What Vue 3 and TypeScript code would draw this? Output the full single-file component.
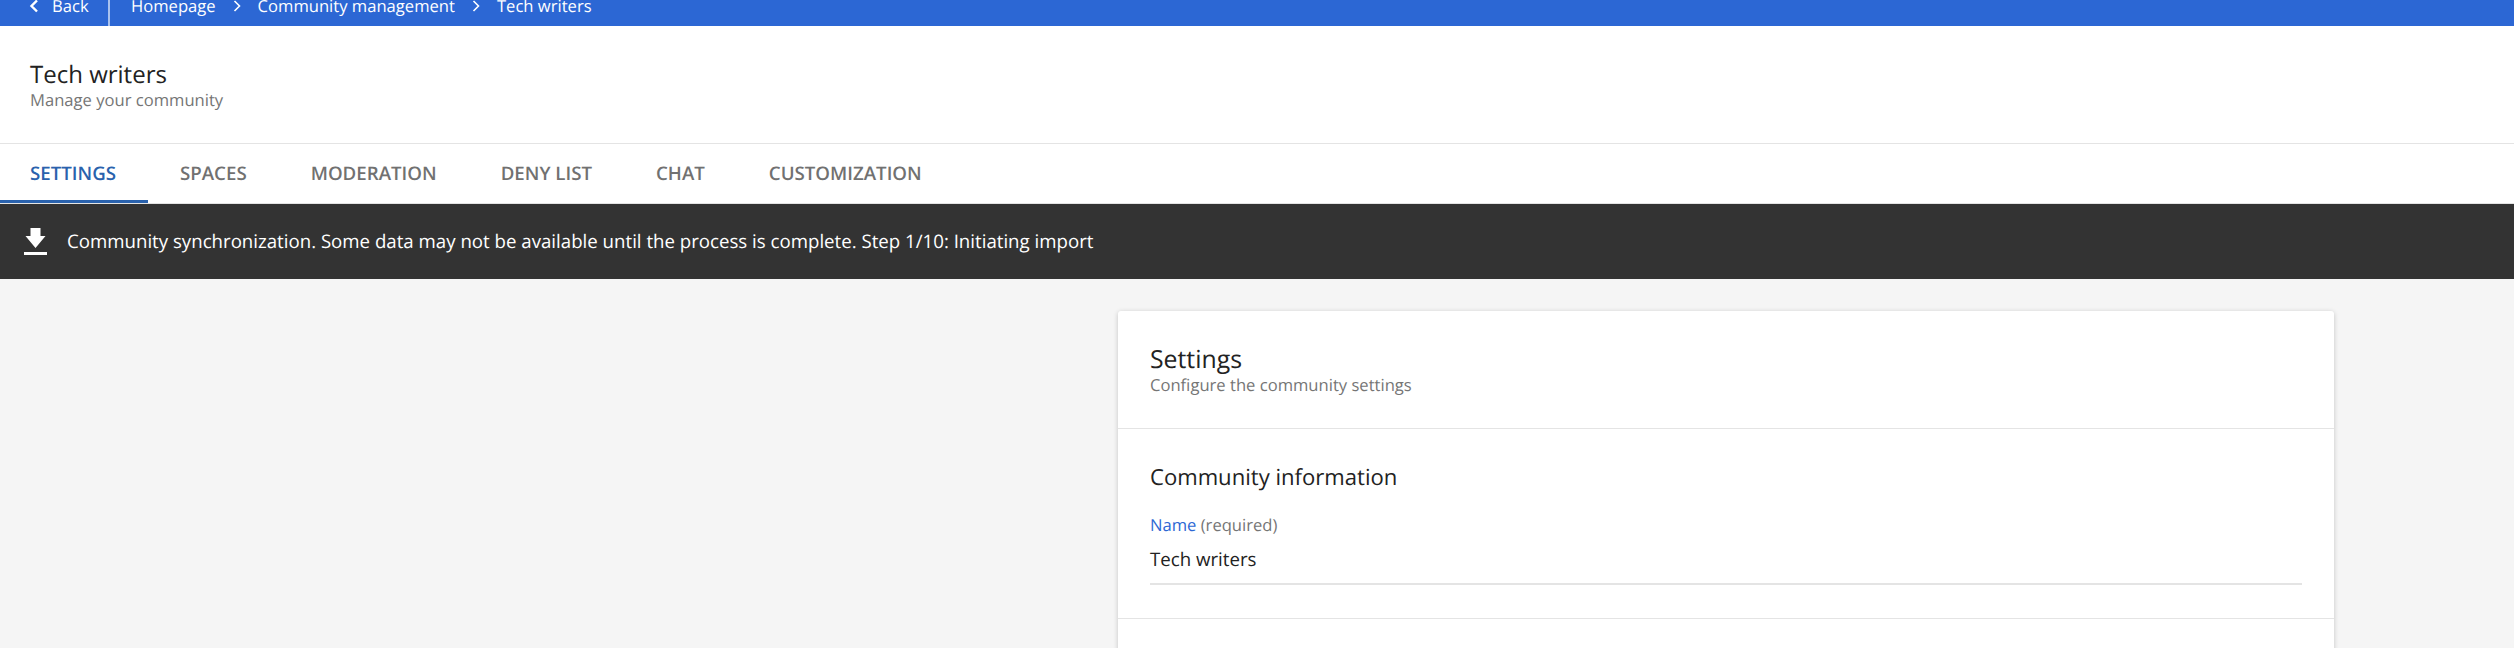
<script setup lang="ts">
const crumbs = ['Homepage', 'Community management', 'Tech writers']
const tabs = ['Settings', 'Spaces', 'Moderation', 'Deny list', 'Chat', 'Customization']
</script>

<template>
  <div class="page">
    <nav class="topbar">
      <a class="back">
        <svg class="chev" viewBox="0 0 10 14" width="10" height="14"><path d="M8 1.500 2.500 7 8 12.500" fill="none" stroke="#fff" stroke-width="2.4" /></svg>
        <span>Back</span>
      </a>
      <div class="crumbs">
        <template v-for="(c, i) in crumbs" :key="c">
          <span>{{ c }}</span>
          <svg v-if="i < crumbs.length - 1" class="sep" viewBox="0 0 8 12" width="8" height="12"><path d="M1.500 1 6.500 6l-5 5" fill="none" stroke="#fff" stroke-width="1.6" /></svg>
        </template>
      </div>
    </nav>

    <header class="head">
      <h1>Tech writers</h1>
      <p>Manage your community</p>
    </header>

    <div class="tabs">
      <a v-for="(t, i) in tabs" :key="t" class="tab" :class="{ active: i === 0 }">{{ t }}</a>
    </div>

    <div class="banner">
      <svg viewBox="0 0 23 27" width="23" height="27"><path d="M6.500 0h10v8h5L11.500 20 1.500 8h5z" fill="#fff" /><rect y="24" width="23" height="3" fill="#fff" /></svg>
      <span class="banner-text">Community synchronization. Some data may not be available until the process is complete. Step 1/10: Initiating import</span>
    </div>

    <main class="content">
      <section class="card">
        <div class="card-head">
          <h2>Settings</h2>
          <p>Configure the community settings</p>
        </div>
        <div class="card-section">
          <h3>Community information</h3>
          <label><span class="blue">Name</span> (required)</label>
          <div class="input">Tech writers</div>
        </div>
      </section>
    </main>
  </div>
</template>

<style scoped>
.page {
  width: 2514px;
  height: 648px;
  overflow: hidden;
  background: #f5f5f5;
  font-family: "Open Sans", sans-serif;
  color: #222;
  text-rendering: geometricPrecision;
  opacity: 0.999;
}
.topbar {
  height: 26px;
  background: #2c67d4;
  color: #fff;
  display: flex;
  align-items: flex-end;
  overflow: hidden;
  font-size: 16.6px;
  font-weight: 500;
}
.back {
  flex: none;
  width: 110px;
  height: 41px;
  display: flex;
  align-items: center;
  gap: 13px;
  padding-left: 29px;
  box-sizing: border-box;
  border-right: 2px solid #a9c2ee;
}
.crumbs {
  height: 41px;
  padding-left: 21px;
  display: flex;
  align-items: center;
  gap: 17px;
}
.head {
  height: 118px;
  box-sizing: border-box;
  background: #fff;
  border-bottom: 1px solid #e4e4e4;
  padding: 33px 30px 0;
}
.head h1 {
  margin: 0;
  font-size: 24px;
  line-height: 31px;
  font-weight: 500;
}
.head p {
  margin: 0;
  font-size: 16.6px;
  line-height: 20px;
  color: #757575;
}
.tabs {
  height: 60px;
  box-sizing: border-box;
  background: #fff;
  border-bottom: 1px solid #e4e4e4;
  display: flex;
}
.tab {
  padding: 0 32px;
  font-size: 18.7px;
  line-height: 59px;
  height: 59px;
  box-sizing: border-box;
  text-transform: uppercase;
  font-weight: 600;
  color: #717171;
}
.tab.active {
  width: 148px;
  padding-left: 30px;
  padding-right: 0;
  color: #2a62ad;
  border-bottom: 3px solid #2a62ad;
}
.banner {
  height: 75px;
  background: #333;
  color: #fff;
  display: flex;
  align-items: center;
  gap: 20px;
  padding-left: 24px;
  font-size: 18.67px;
}
.banner-text {
  margin-bottom: 1px;
}
.content {
  padding: 32px 0 0 1118px;
}
.card {
  width: 1216px;
  height: 400px;
  background: #fff;
  border-radius: 3px;
  box-shadow: 0 1px 5px rgba(0, 0, 0, 0.2);
}
.card-head {
  height: 118px;
  box-sizing: border-box;
  border-bottom: 1px solid #e4e4e4;
  padding: 32px 32px 0;
}
.card-head h2 {
  margin: 0;
  font-size: 24.8px;
  line-height: 32px;
  font-weight: 500;
}
.card-head p {
  margin: 0;
  font-size: 16.6px;
  line-height: 20px;
  color: #757575;
}
.card-section {
  height: 190px;
  box-sizing: border-box;
  border-bottom: 1px solid #e4e4e4;
  padding: 33px 32px 0;
}
.card-section h3 {
  margin: 0 0 22px;
  font-size: 22.1px;
  line-height: 30px;
  font-weight: 500;
}
label {
  display: block;
  font-size: 16.6px;
  line-height: 22px;
  color: #757575;
}
.blue {
  color: #2c67d4;
}
.input {
  margin-top: 10px;
  height: 39px;
  box-sizing: border-box;
  border-bottom: 2px solid #e4e4e4;
  font-size: 18.67px;
  line-height: 28px;
}
</style>

<style>
html, body { margin: 0; }
</style>
